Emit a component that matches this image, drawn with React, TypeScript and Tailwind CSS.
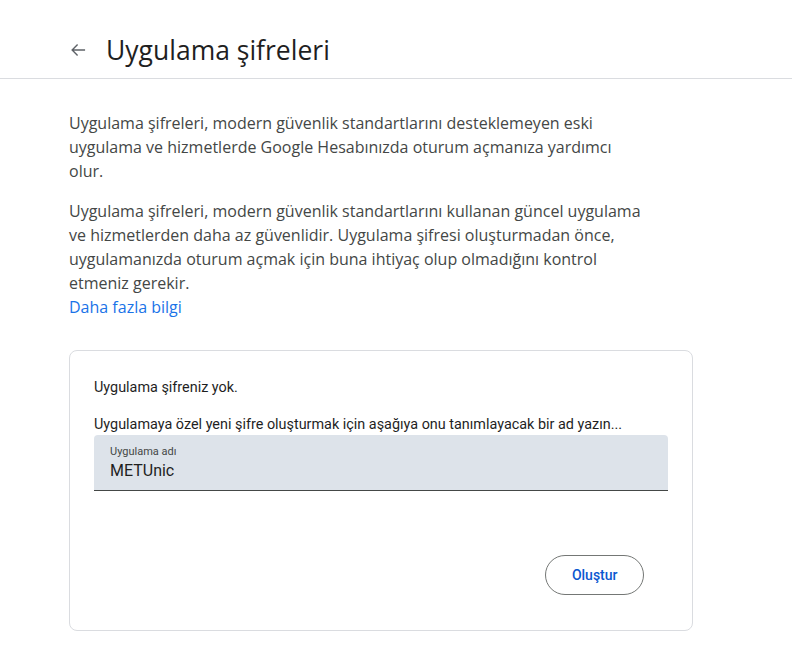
import React, { useState } from 'react';

export default function App() {
  const [name, setName] = useState('METUnic');

  return (
    <div className="min-h-screen bg-white text-[#1f1f1f]" style={{ fontFamily: 'Roboto, "Open Sans", sans-serif' }}>
      {/* Header */}
      <div className="flex h-[79px] items-end border-b border-[#dadce0] pb-[10px]">
        <div className="flex items-center pl-[64px]">
          <button className="flex h-[28px] w-[28px] items-center justify-center text-[#5f6368]">
            <svg width="20" height="20" viewBox="0 0 24 24" fill="none" stroke="currentColor" strokeWidth="1.7">
              <path d="M20.5 12H5M11.5 5.5 5 12l6.5 6.5" />
            </svg>
          </button>
          <h1 className="ml-[14px] text-[26.5px] leading-[36px] font-normal text-[#1f1f1f]" style={{ fontFamily: '"Open Sans", Roboto, sans-serif' }}>
            Uygulama şifreleri
          </h1>
        </div>
      </div>

      {/* Content */}
      <div className="pl-[69px] pt-[32px] pr-[100px]">
        <div className="w-[572px] text-[16px] leading-[24px] text-[#444746]" style={{ fontFamily: '"Open Sans", Roboto, sans-serif' }}>
          <p>
            Uygulama şifreleri, modern güvenlik standartlarını desteklemeyen eski uygulama ve hizmetlerde Google Hesabınızda oturum açmanıza yardımcı olur.
          </p>
          <p className="mt-[16px]">
            Uygulama şifreleri, modern güvenlik standartlarını kullanan güncel uygulama ve hizmetlerden daha az güvenlidir. Uygulama şifresi oluşturmadan önce, uygulamanızda oturum açmak için buna ihtiyaç olup olmadığını kontrol etmeniz gerekir.
          </p>
          <a href="#" className="block text-[#1a73e8]">Daha fazla bilgi</a>
        </div>

        {/* Card */}
        <div className="mt-[31px] w-[624px] rounded-[8px] border border-[#dadce0] px-[24px] pt-[27px] pb-[35px]">
          <p className="text-[14.4px] leading-[20px] text-[#1f1f1f]">Uygulama şifreniz yok.</p>
          <p className="mt-[17px] text-[14.4px] leading-[20px] text-[#1f1f1f]">
            Uygulamaya özel yeni şifre oluşturmak için aşağıya onu tanımlayacak bir ad yazın...
          </p>
          <div className="h-[56px] rounded-t-[4px] border-b border-[#444746] bg-[#dde3ea] px-[16px] pt-[10px]">
            <label className="block text-[11px] leading-[14px] text-[#444746]">Uygulama adı</label>
            <input
              value={name}
              onChange={(e) => setName(e.target.value)}
              className="block w-full bg-transparent text-[16px] leading-[24px] text-[#1f1f1f] outline-none"
            />
          </div>
          <div className="mt-[64px] flex justify-end pr-[24px]">
            <button className="h-[40px] rounded-full border border-[#747775] px-[25.5px] text-[14px] font-medium text-[#0b57d0]">
              Oluştur
            </button>
          </div>
        </div>
      </div>
    </div>
  );
}
